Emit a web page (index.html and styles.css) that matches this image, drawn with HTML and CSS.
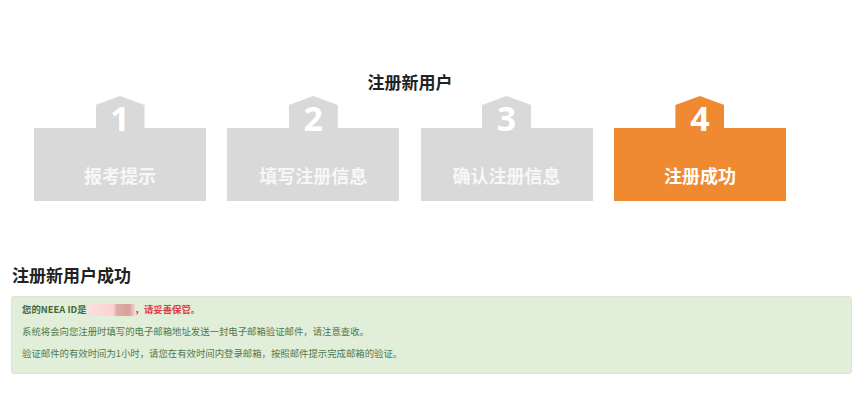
FILE: index.html
```html
<!DOCTYPE html>
<html lang="zh-CN">
<head>
<meta charset="utf-8">
<title>注册新用户成功</title>
<link rel="stylesheet" href="styles.css">
</head>
<body>
<div class="wrap">
  <h2 class="title">注册新用户</h2>
  <div class="steps">
    <div class="step">
      <div class="tab">1</div>
      <div class="box">报考提示</div>
    </div>
    <div class="step">
      <div class="tab">2</div>
      <div class="box">填写注册信息</div>
    </div>
    <div class="step">
      <div class="tab">3</div>
      <div class="box">确认注册信息</div>
    </div>
    <div class="step active">
      <div class="tab">4</div>
      <div class="box">注册成功</div>
    </div>
  </div>
</div>
<h3 class="heading">注册新用户成功</h3>
<div class="alert">
  <p class="line"><span class="strong">您的NEEA ID是</span><span class="redact"></span><span class="warn">，请妥善保管。</span></p>
  <p class="line">系统将会向您注册时填写的电子邮箱地址发送一封电子邮箱验证邮件，请注意查收。</p>
  <p class="line">验证邮件的有效时间为1小时，请您在有效时间内登录邮箱，按照邮件提示完成邮箱的验证。</p>
</div>
</body>
</html>
```
FILE: styles.css
```css
html, body {
  margin: 0;
  padding: 0;
  background: #ffffff;
}
body {
  font-family: "Open Sans", "Noto Sans CJK SC", sans-serif;
  color: #333333;
}
.wrap {
  width: 752px;
  margin-left: 34px;
  padding-top: 70px;
}
.title {
  margin: 0;
  text-align: center;
  font-family: "Noto Sans CJK SC", sans-serif;
  font-size: 17px;
  line-height: 24px;
  font-weight: bold;
  color: #222222;
}
.steps {
  display: flex;
  gap: 21.3px;
  margin-top: 2px;
}
.step {
  width: 172px;
  display: flex;
  flex-direction: column;
  --c: #d9d9d9;
}
.step.active {
  --c: #ef8a33;
}
.tab {
  position: relative;
  z-index: 1;
  align-self: center;
  width: 49px;
  height: 32px;
  box-sizing: border-box;
  padding-top: 5px;
  text-align: center;
  font-family: "Open Sans", sans-serif;
  font-weight: bold;
  font-size: 34px;
  line-height: 34px;
  color: #ffffff;
}
.tab::before {
  content: "";
  position: absolute;
  inset: 0;
  z-index: -1;
  background: var(--c);
  clip-path: polygon(0 9px, 50% 0, 100% 9px, 100% 100%, 0 100%);
}
.box {
  height: 73px;
  box-sizing: border-box;
  padding-top: 36px;
  background: var(--c);
  text-align: center;
  font-family: "Noto Sans CJK SC", sans-serif;
  font-weight: bold;
  font-size: 18px;
  line-height: 22px;
  color: #f7f7f7;
}
.step.active .box {
  color: #ffffff;
}
.heading {
  margin: 62px 0 0 12px;
  font-family: "Noto Sans CJK SC", sans-serif;
  font-size: 17px;
  line-height: 24px;
  font-weight: bold;
  color: #222222;
}
.alert {
  margin: 9px 13px 0 11px;
  padding: 1px 10px 9px;
  background: #e1eed9;
  border: 1px solid #d9e8cf;
  border-radius: 3px;
  font-family: "Noto Sans CJK SC", sans-serif;
  font-size: 9.4px;
  line-height: 22px;
  color: #52784a;
}
.line {
  margin: 0;
  white-space: nowrap;
}
.strong {
  font-weight: bold;
  color: #46683d;
}
.redact {
  display: inline-block;
  vertical-align: middle;
  width: 48px;
  height: 12px;
  background: linear-gradient(to right, #fbe0e0 0, #fcd2d2 55%, #e0aaa6 62%, #d8a19c 88%, #efd6d4 100%);
  filter: blur(0.6px);
}
.warn {
  font-weight: bold;
  color: #e03838;
}
```
